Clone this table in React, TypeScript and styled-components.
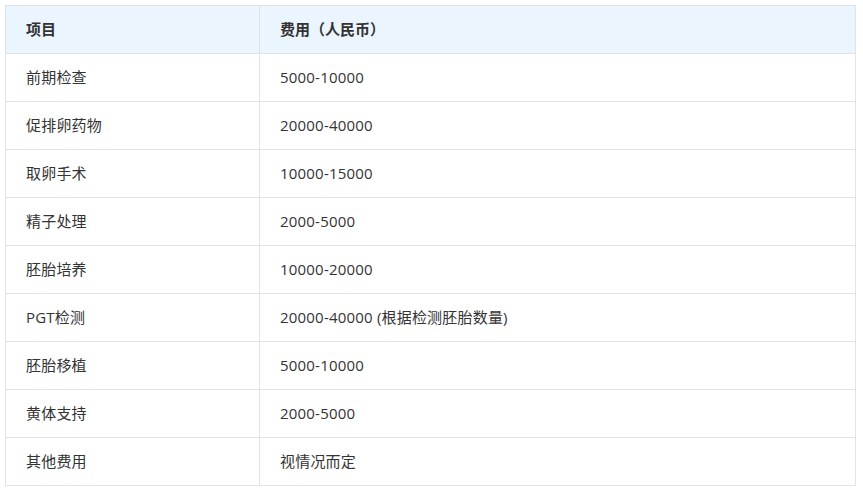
import React from "react";
import styled, { createGlobalStyle } from "styled-components";

const Global = createGlobalStyle`
  html, body { margin: 0; padding: 0; background: #ffffff; }
  body { font-family: "Open Sans", "Noto Sans CJK SC", sans-serif; }
`;

const Wrap = styled.div`
  padding: 5px 8px 8px 5px;
`;

const Table = styled.table`
  width: 851px;
  border-collapse: collapse;
  font-size: 15px;
  color: #333333;
`;

const HeadCell = styled.th<{ $w?: string }>`
  width: ${(p) => p.$w ?? "auto"};
  height: 48px;
  padding: 0 20px 2px;
  box-sizing: border-box;
  text-align: left;
  font-weight: 700;
  background: #eaf5fe;
  border: 1px solid #e0e3e6;
`;

const Cell = styled.td`
  height: 48px;
  padding: 0 20px 2px;
  box-sizing: border-box;
  border: 1px solid #e3e3e3;
  font-weight: 400;
  letter-spacing: 0.2px;
`;

const rows: [string, string][] = [
  ["前期检查", "5000-10000"],
  ["促排卵药物", "20000-40000"],
  ["取卵手术", "10000-15000"],
  ["精子处理", "2000-5000"],
  ["胚胎培养", "10000-20000"],
  ["PGT检测", "20000-40000 (根据检测胚胎数量)"],
  ["胚胎移植", "5000-10000"],
  ["黄体支持", "2000-5000"],
  ["其他费用", "视情况而定"],
];

export default function App() {
  return (
    <>
      <Global />
      <Wrap>
        <Table>
          <thead>
            <tr>
              <HeadCell $w="254px">项目</HeadCell>
              <HeadCell>费用（人民币）</HeadCell>
            </tr>
          </thead>
          <tbody>
            {rows.map(([a, b]) => (
              <tr key={a}>
                <Cell>{a}</Cell>
                <Cell>{b}</Cell>
              </tr>
            ))}
          </tbody>
        </Table>
      </Wrap>
    </>
  );
}
